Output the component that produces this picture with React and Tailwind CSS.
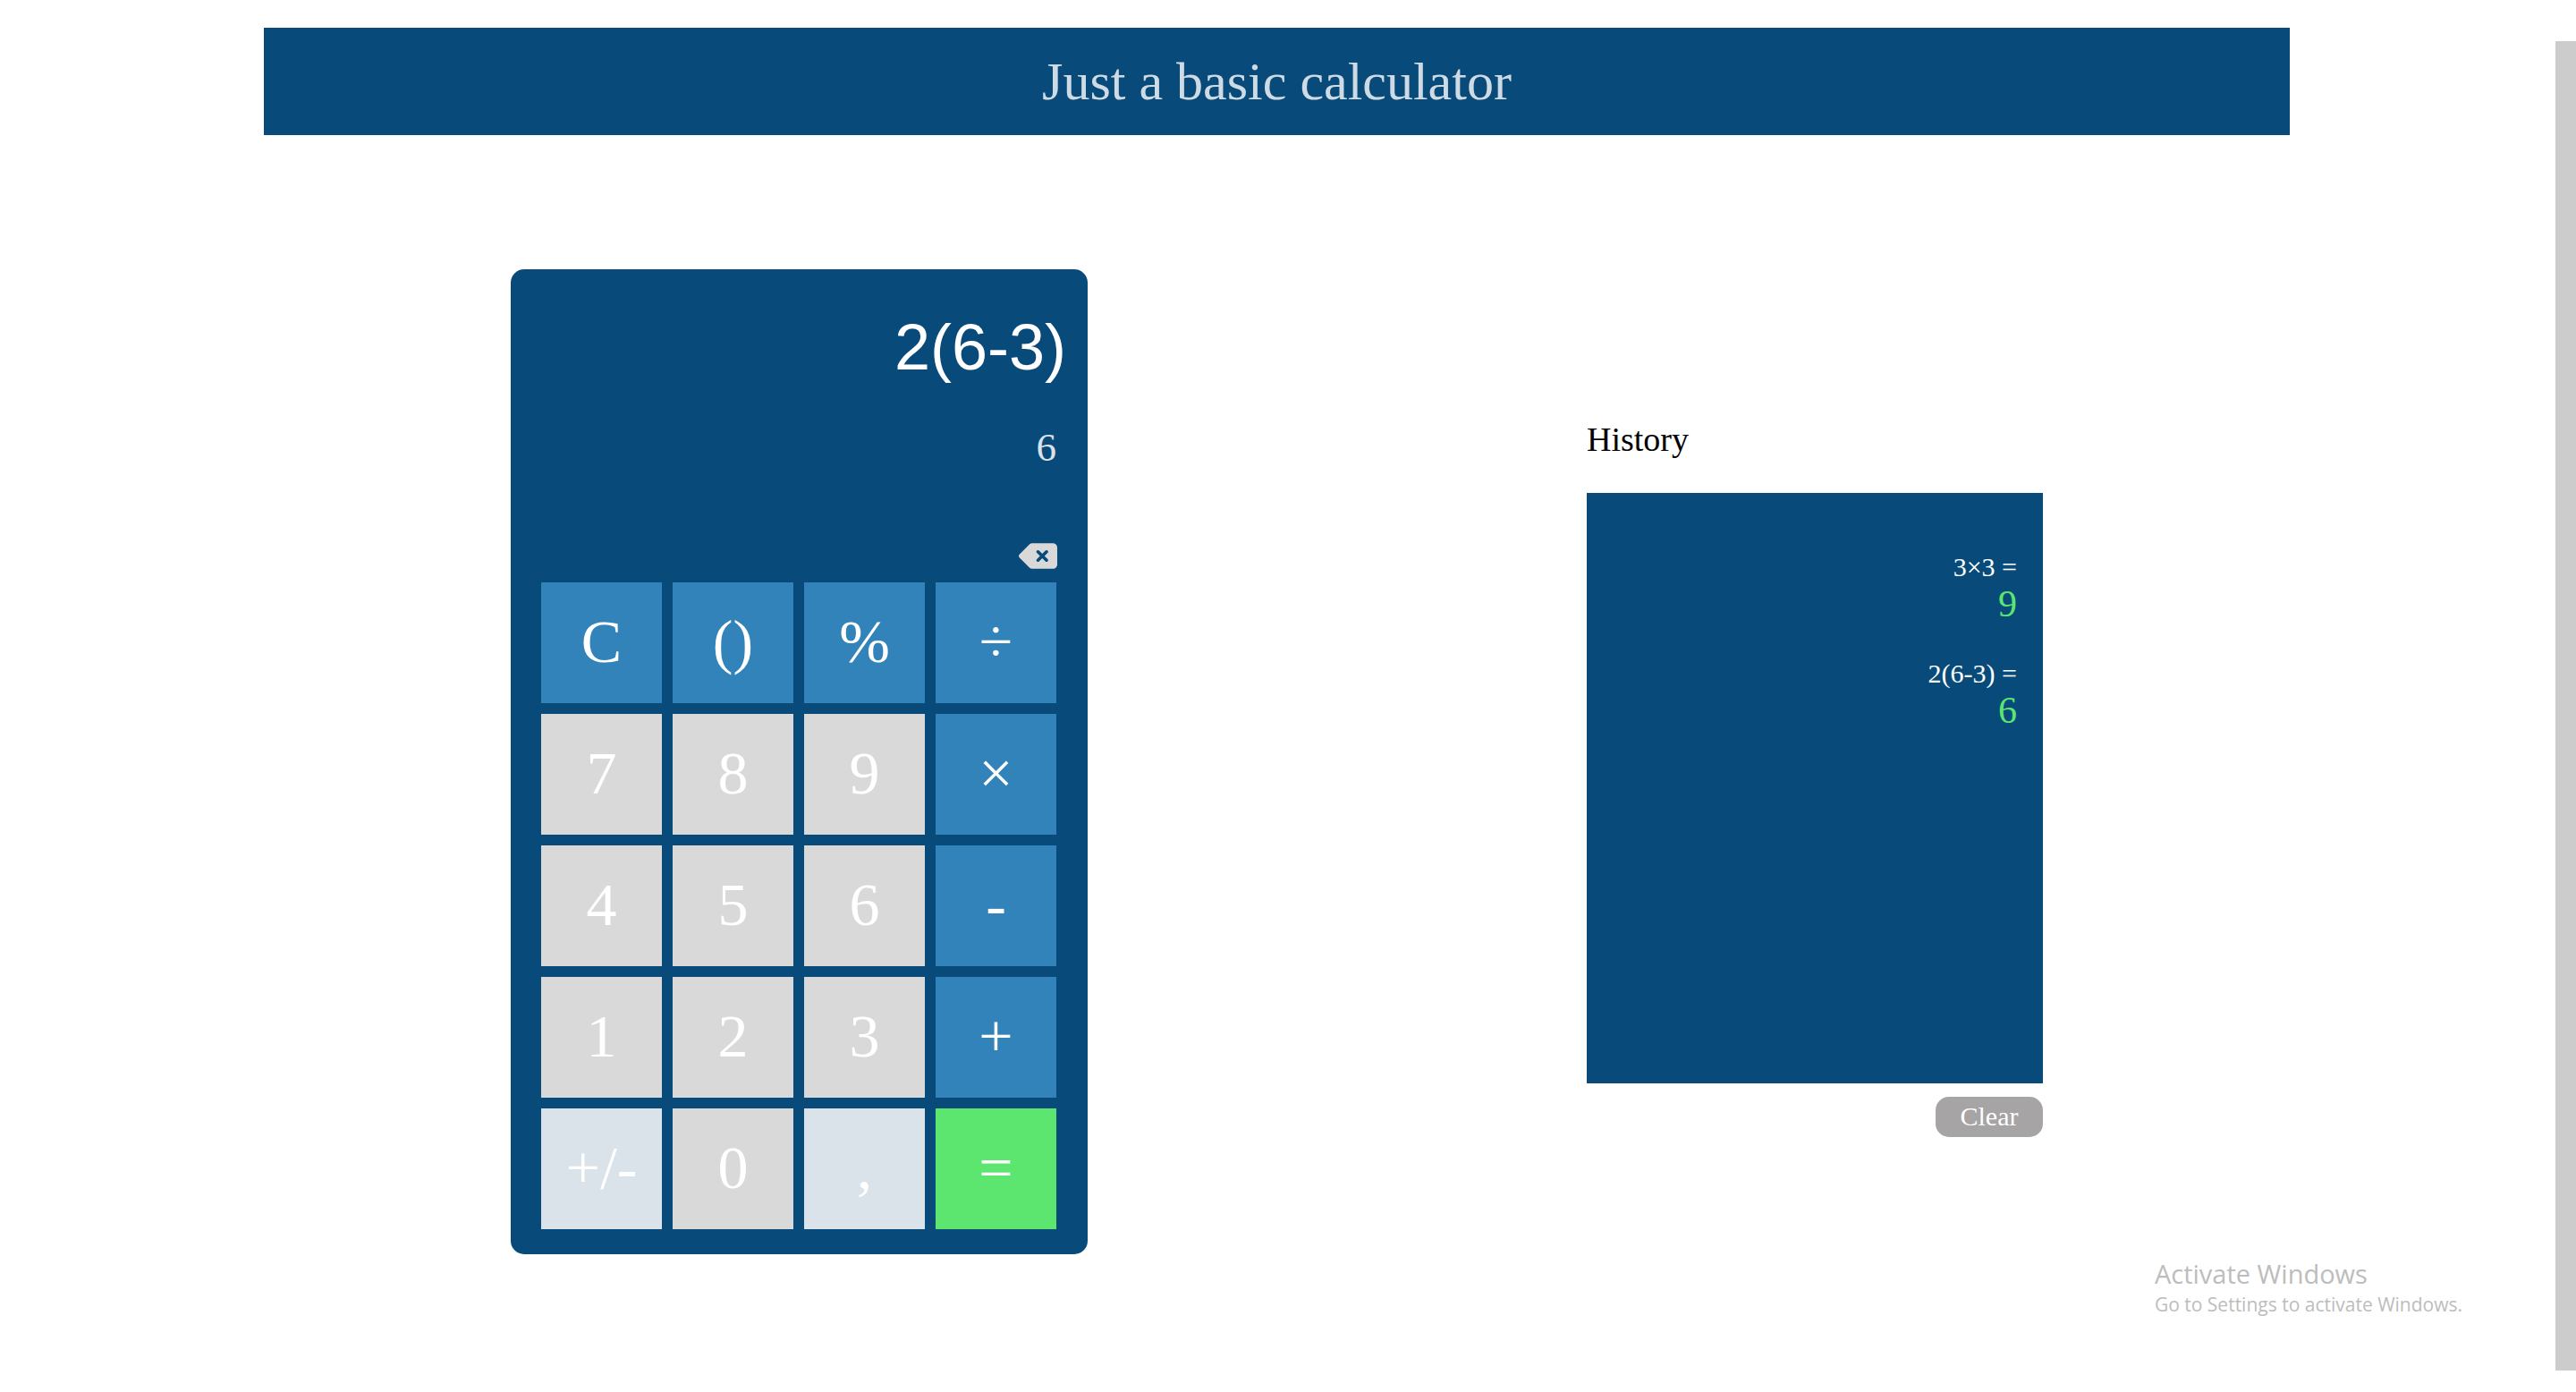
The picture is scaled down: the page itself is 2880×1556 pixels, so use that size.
import { useState } from "react";
import { FaDeleteLeft } from "react-icons/fa6";

const KEYS = [
  ["C", "op"], ["()", "op"], ["%", "op"], ["÷", "op"],
  ["7", "num"], ["8", "num"], ["9", "num"], ["×", "op"],
  ["4", "num"], ["5", "num"], ["6", "num"], ["-", "op"],
  ["1", "num"], ["2", "num"], ["3", "num"], ["+", "op"],
  ["+/-", "alt"], ["0", "num"], [",", "alt"], ["=", "eq"],
];

const KEY_COLORS = {
  op: "bg-[#3383bb]",
  num: "bg-[#d9d9d9]",
  alt: "bg-[#dae2ea]",
  eq: "bg-[#5de66f]",
};

function Calculator() {
  const [expression, setExpression] = useState("2(6-3)");

  const press = (key) => {
    if (key === "C") setExpression("");
    else if (key !== "=" && key !== "+/-") setExpression(expression + key);
  };

  return (
    <section
      aria-label="Calculator"
      className="w-[645px] rounded-[15px] bg-[#084b7b] pt-[46px] pr-[35px] pb-7 pl-[34px]"
    >
      <div className="-mr-[11px]">
        <input
          type="text"
          aria-label="Expression"
          value={expression}
          onChange={(event) => setExpression(event.target.value)}
          className="block w-full bg-transparent text-right font-['Liberation_Sans',Arial,sans-serif] text-[72px] leading-[83px] text-white outline-none"
        />
      </div>
      <output className="mt-11 block text-right text-[45px] leading-[52px] text-[#dae2ea]">6</output>
      <div className="-mr-px mt-[76px] mb-[10px] flex justify-end">
        <button
          type="button"
          aria-label="Delete last character"
          onClick={() => setExpression(expression.slice(0, -1))}
          className="text-[#d9d9d9]"
        >
          <FaDeleteLeft className="block h-[39px] w-[43px]" />
        </button>
      </div>
      <div className="grid grid-cols-4 gap-3">
        {KEYS.map(([label, kind]) => (
          <button
            key={label}
            type="button"
            onClick={() => press(label)}
            className={`h-[135px] pb-1 text-center text-[68px] leading-[78px] text-white ${KEY_COLORS[kind]}`}
          >
            {label}
          </button>
        ))}
      </div>
    </section>
  );
}

function History() {
  const [entries, setEntries] = useState([
    { expression: "3×3", result: "9" },
    { expression: "2(6-3)", result: "6" },
  ]);

  return (
    <section className="w-[510px]">
      <h2 className="my-[38px] text-[38px] leading-[43px] text-black">History</h2>
      <ul className="h-[660px] bg-[#084b7b] pt-[66px] pr-[29px] text-right">
        {entries.map(({ expression, result }) => (
          <li key={expression} className="mb-[37px]">
            <p className="text-[30px] leading-[34px] text-white">{expression} =</p>
            <p className="text-[42px] leading-[48px] text-[#5de66f]">{result}</p>
          </li>
        ))}
      </ul>
      <div className="mt-[15px] flex justify-end">
        <button
          type="button"
          onClick={() => setEntries([])}
          className="h-[45px] w-[120px] rounded-[15px] bg-[#a6a4a4] pb-0.5 text-[30px] leading-[34px] text-white"
        >
          Clear
        </button>
      </div>
    </section>
  );
}

export default function App() {
  return (
    <div className="flex min-h-screen bg-white font-['Liberation_Serif','Times_New_Roman',serif]">
      <div className="min-w-0 flex-1 pt-[31px] pr-0.5">
        <header className="mx-[295px] flex h-[120px] items-center justify-center bg-[#084b7b]">
          <h1 className="text-[60px] leading-[68px] text-[#cedbe5]">Just a basic calculator</h1>
        </header>
        <main className="mx-[295px] mt-[150px] flex items-center justify-between px-[276px]">
          <Calculator />
          <History />
        </main>
      </div>
      <div className="mt-[46px] mb-6 w-[23px] bg-[#cccccc]" />
      <aside className="absolute right-[127px] bottom-[83px] font-['Open_Sans','Segoe_UI',sans-serif] text-[#bdbdbd]">
        <p className="text-[29px] leading-[38px]">Activate Windows</p>
        <p className="text-[21px] leading-[30px]">Go to Settings to activate Windows.</p>
      </aside>
    </div>
  );
}
